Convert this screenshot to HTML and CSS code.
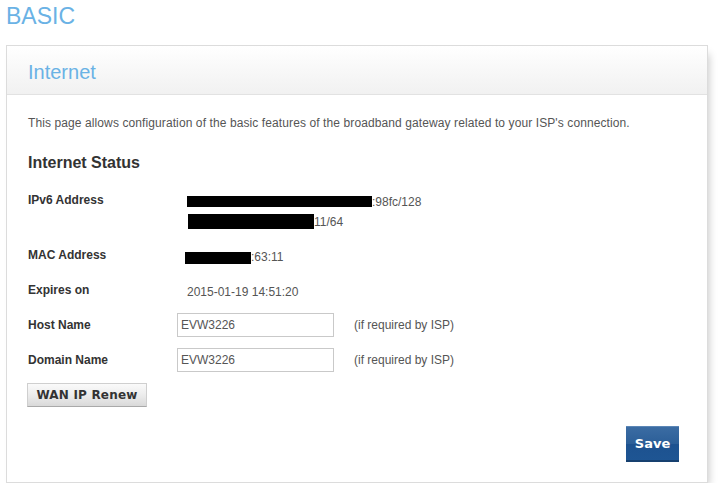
FILE: index.html
```html
<!DOCTYPE html>
<html>
<head>
<meta charset="utf-8">
<link rel="stylesheet" href="styles.css">
</head>
<body>
<div class="page">
  <h1 class="page-title">BASIC</h1>
  <div class="panel">
    <div class="panel-head">Internet</div>
    <div class="panel-body">
      <p class="desc">This page allows configuration of the basic features of the broadband gateway related to your ISP's connection.</p>
      <h2 class="section-title">Internet Status</h2>

      <div class="row row-top">
        <div class="label">IPv6 Address</div>
        <div class="value">
          <div class="vline"><span class="redact r1"></span>:98fc/128</div>
          <div class="vline"><span class="redact r2"></span>11/64</div>
        </div>
      </div>

      <div class="row row-top gap15">
        <div class="label">MAC Address</div>
        <div class="value">
          <div class="vline"><span class="redact r3"></span>:63:11</div>
        </div>
      </div>

      <div class="row row-top gap15">
        <div class="label">Expires on</div>
        <div class="value">
          <div class="vline">2015-01-19 14:51:20</div>
        </div>
      </div>

      <div class="row row-input">
        <div class="label">Host Name</div>
        <input class="field" type="text" value="EVW3226">
        <span class="hint">(if required by ISP)</span>
      </div>

      <div class="row row-input">
        <div class="label">Domain Name</div>
        <input class="field" type="text" value="EVW3226">
        <span class="hint">(if required by ISP)</span>
      </div>

      <div class="row row-btn">
        <button class="btn-grey" type="button">WAN IP Renew</button>
      </div>

      <div class="actions">
        <button class="btn-save" type="button">Save</button>
      </div>
    </div>
  </div>
</div>
</body>
</html>
```

FILE: styles.css
```css
html, body {
  margin: 0;
  padding: 0;
  background: #ffffff;
}

.page {
  padding: 0 17px 0 6px;
  font-family: "Liberation Sans", Arial, sans-serif;
}

.page-title {
  margin: 3px 0 0 0;
  font-size: 23px;
  line-height: 26px;
  font-weight: normal;
  color: #6ab2e5;
}

.panel {
  margin-top: 16px;
  border: 1px solid #dcdcdc;
  background: #ffffff;
  box-shadow: 4px 6px 8px -3px rgba(0, 0, 0, 0.22);
}

.panel-head {
  height: 49px;
  box-sizing: border-box;
  padding: 13px 0 0 21px;
  font-size: 20px;
  line-height: 26px;
  color: #6ab2e5;
  background: linear-gradient(to bottom, #ffffff 0%, #f1f1f1 100%);
  border-bottom: 1px solid #e2e2e2;
}

.panel-body {
  padding: 21px 28px 20px 21px;
}

.desc {
  margin: 0;
  font-size: 12px;
  line-height: 15px;
  color: #555555;
  letter-spacing: 0.1px;
  white-space: nowrap;
}

.section-title {
  margin: 22px 0 0 0;
  font-size: 16px;
  line-height: 20px;
  font-weight: bold;
  color: #333333;
}

.row {
  display: flex;
}

.row-top {
  align-items: flex-start;
}

.section-title + .row {
  margin-top: 19px;
}

.gap15 {
  margin-top: 15px;
}

.row-input {
  align-items: center;
  height: 24px;
  margin-top: 11px;
}

.row-btn {
  margin-top: 11px;
}

.label {
  width: 149px;
  flex: none;
  font-size: 12px;
  line-height: 16px;
  font-weight: bold;
  color: #333333;
}

.value {
  padding-left: 10px;
  font-size: 12px;
  color: #555555;
}

.vline {
  height: 20px;
  line-height: 20px;
  white-space: nowrap;
}

.redact {
  display: inline-block;
  background: #000000;
  vertical-align: top;
}

.r1 {
  width: 185px;
  height: 11px;
  margin-top: 4px;
}

.r2 {
  width: 126px;
  height: 15px;
  margin-top: 2px;
  margin-left: 1px;
}

.r3 {
  width: 66px;
  height: 12px;
  margin-top: 5px;
  margin-left: -2px;
}

.field {
  box-sizing: border-box;
  width: 157px;
  height: 24px;
  margin: 0;
  padding: 0 3px;
  border: 1px solid #c9c9c9;
  font-family: "Liberation Sans", Arial, sans-serif;
  font-size: 12px;
  color: #555555;
  background: #ffffff;
  outline: none;
}

.hint {
  margin-left: 20px;
  font-size: 12px;
  color: #555555;
}

.btn-grey {
  width: 120px;
  height: 24px;
  margin: 0 0 0 -1px;
  padding: 0;
  border: 1px solid #cfcfcf;
  border-bottom-color: #a9a9a9;
  background: linear-gradient(to bottom, #fafafa 0%, #ececec 50%, #d9d9d9 100%);
  font-family: "DejaVu Sans", Verdana, sans-serif;
  font-size: 12px;
  font-weight: bold;
  color: #333333;
  letter-spacing: 0.2px;
}

.actions {
  display: flex;
  justify-content: flex-end;
  margin-top: 19px;
}

.btn-save {
  width: 53px;
  height: 36px;
  margin: 0;
  padding: 0;
  border: none;
  border-top: 1px solid #5b86b6;
  border-bottom: 2px solid #16406f;
  background: linear-gradient(to bottom, #3b6ca3 0%, #2c5f98 50%, #1d5290 52%, #1e5593 100%);
  font-family: "DejaVu Sans", Verdana, sans-serif;
  font-size: 13px;
  font-weight: bold;
  color: #ffffff;
}
```
